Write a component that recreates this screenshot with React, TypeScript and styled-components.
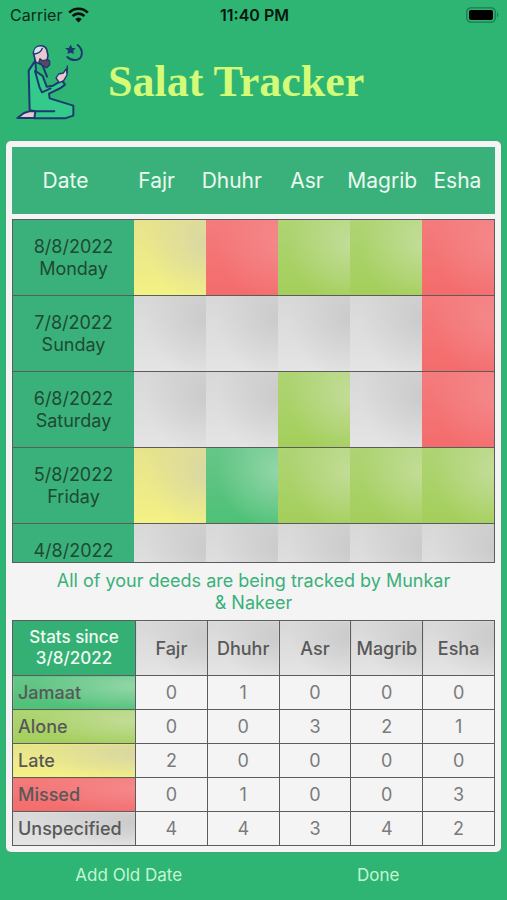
import React from "react";
import styled, { createGlobalStyle } from "styled-components";

type Status = "jamaat" | "alone" | "late" | "missed" | "unspecified";

interface Tone {
  top: string;
  bottom: string;
  corner: string;
}

const tones: Record<Status, Tone> = {
  jamaat: { top: "#66c688", bottom: "#4ec177", corner: "#9ad9ae" },
  alone: { top: "#aed474", bottom: "#a4cf5b", corner: "#c6de9e" },
  late: { top: "#e6e38c", bottom: "#f4f185", corner: "#d6d5a6" },
  missed: { top: "#f47b7c", bottom: "#f46c6c", corner: "#f48a8c" },
  unspecified: { top: "#d8d8d8", bottom: "#e4e4e4", corner: "#c8c8c8" },
};

const shade = ({ top, bottom, corner }: Tone) =>
  `radial-gradient(ellipse 85% 80% at 100% 30%, ${corner}dd, ${corner}77 45%, ${corner}00), linear-gradient(to bottom, ${top}, ${bottom})`;

const prayers = ["Fajr", "Dhuhr", "Asr", "Magrib", "Esha"];

const days: { date: string; day?: string; marks: Status[] }[] = [
  { date: "8/8/2022", day: "Monday", marks: ["late", "missed", "alone", "alone", "missed"] },
  { date: "7/8/2022", day: "Sunday", marks: ["unspecified", "unspecified", "unspecified", "unspecified", "missed"] },
  { date: "6/8/2022", day: "Saturday", marks: ["unspecified", "unspecified", "alone", "unspecified", "missed"] },
  { date: "5/8/2022", day: "Friday", marks: ["late", "jamaat", "alone", "alone", "alone"] },
  { date: "4/8/2022", marks: ["unspecified", "unspecified", "unspecified", "unspecified", "unspecified"] },
];

const stats: { label: string; status: Status; counts: number[] }[] = [
  { label: "Jamaat", status: "jamaat", counts: [0, 1, 0, 0, 0] },
  { label: "Alone", status: "alone", counts: [0, 0, 3, 2, 1] },
  { label: "Late", status: "late", counts: [2, 0, 0, 0, 0] },
  { label: "Missed", status: "missed", counts: [0, 1, 0, 0, 3] },
  { label: "Unspecified", status: "unspecified", counts: [4, 4, 3, 4, 2] },
];

const GlobalStyle = createGlobalStyle`
  * { box-sizing: border-box; }
  body { margin: 0; background: #2eb574; }
`;

const Screen = styled.div`
  display: flex;
  flex-direction: column;
  height: 100vh;
  min-height: 640px;
  background: #2eb574;
  font-family: Inter, "Liberation Sans", sans-serif;
`;

const StatusBar = styled.div`
  display: grid;
  grid-template-columns: 1fr auto 1fr;
  align-items: center;
  height: 30px;
  padding: 0 8px 0 10px;
  font-size: 16px;
  color: #0a2c1c;
`;

const Carrier = styled.div`
  display: flex;
  align-items: center;
  gap: 6px;
`;

const Clock = styled.div`
  font-weight: 600;
  color: #05170e;
`;

const Battery = styled.svg`
  justify-self: end;
`;

const Header = styled.header`
  display: flex;
  align-items: flex-start;
  gap: 18px;
  height: 111px;
  padding: 8px 10px 0;
`;

const Title = styled.h1`
  margin: 0;
  padding-top: 20px;
  font-family: "Liberation Serif", serif;
  font-size: 44px;
  line-height: 48px;
  font-weight: 700;
  color: #d3fb78;
`;

const Panel = styled.main`
  flex: 1;
  min-height: 0;
  display: flex;
  flex-direction: column;
  margin: 0 6px;
  padding: 6px;
  border-radius: 5px;
  background: #f4f4f4;
  box-shadow: 0 0 2px #6c8f7e;
`;

const LogHead = styled.div`
  display: grid;
  grid-template-columns: 107px repeat(5, 1fr);
  align-items: center;
  flex: none;
  height: 67px;
  margin-bottom: 5px;
  background: #3ab17a;
  color: #ecf9f0;
  font-size: 21px;
  text-align: center;
`;

const LogScroll = styled.div`
  flex: 1;
  min-height: 0;
  overflow: hidden;
  border: 1px solid #5c5c5c;
`;

const Table = styled.table`
  width: 100%;
  border-collapse: collapse;
  table-layout: fixed;
`;

const LogTable = styled(Table)`
  border-collapse: separate;
  border-spacing: 0;

  th,
  td {
    border-bottom: 1px solid #5c5c5c;
  }
`;

const DayCell = styled.th`
  width: 121px;
  padding: 16px 0 0;
  vertical-align: top;
  background: #3ab17a;
  color: #1d4a34;
  font-size: 18px;
  line-height: 22px;
  font-weight: 400;
`;

const MarkCell = styled.td<{ $status: Status }>`
  padding: 0;
  background: ${({ $status }) => shade(tones[$status])};
`;

const MarkButton = styled.button`
  display: block;
  width: 100%;
  height: 75px;
  border: 0;
  background: transparent;
`;

const Note = styled.p`
  flex: none;
  margin: 0;
  padding: 7px 36px 6px;
  font-size: 18px;
  line-height: 22px;
  text-align: center;
  color: #3ab17a;
`;

const StatsTable = styled(Table)`
  flex: none;
  color: #585858;
  font-size: 18px;

  th,
  td {
    height: 34px;
    padding: 0;
    border: 1px solid #5c5c5c;
  }
  thead th {
    height: 55px;
  }
`;

const StatsCorner = styled.th`
  width: 123px;
  background: #35b075;
  color: #eefaf2;
  font-size: 17px;
  line-height: 21px;
  font-weight: 500;
`;

const PrayerHead = styled.th`
  background: ${shade(tones.unspecified)};
  font-weight: 500;
`;

const StatusLabel = styled.th<{ $status: Status }>`
  && {
    padding-left: 5px;
  }
  background: ${({ $status }) => shade(tones[$status])};
  font-weight: 500;
  text-align: left;
`;

const Count = styled.td`
  color: #7b7b7b;
  text-align: center;
`;

const Footer = styled.footer`
  display: grid;
  grid-template-columns: 1fr 1fr;
  flex: none;
  height: 48px;
  padding: 0 4px 3px;
`;

const FooterButton = styled.button`
  border: 0;
  background: transparent;
  font: inherit;
  font-size: 17px;
  color: #c5f5d4;
`;

const WifiIcon = () => (
  <svg width="21" height="16" viewBox="0 0 21 16" aria-hidden="true">
    <g fill="none" stroke="#06120c" strokeWidth="2.7">
      <path d="M1.2 5.6a13.2 13.2 0 0 1 18.6 0" />
      <path d="M4.6 9.1a8.4 8.4 0 0 1 11.8 0" />
    </g>
    <path d="M10.5 15.4 7.2 12a4.8 4.8 0 0 1 6.6 0z" fill="#06120c" />
  </svg>
);

const BatteryIcon = () => (
  <Battery width="33" height="16" viewBox="0 0 33 16" aria-hidden="true">
    <rect x="0.8" y="0.8" width="28.4" height="14.4" rx="4" fill="none" stroke="#1d7a4f" strokeWidth="1.3" />
    <rect x="3" y="3" width="24" height="10" rx="2" fill="#000" />
    <path d="M31 5.6c1.6.6 1.6 4.2 0 4.8z" fill="#1d7a4f" />
  </Battery>
);

const Logo = () => (
  <svg width="80" height="86" viewBox="0 0 240 258" aria-hidden="true">
    <g stroke="#1d3a70" strokeWidth="6" strokeLinejoin="round" strokeLinecap="round">
      <path d="M22 240l20-15 16-5h22l-4 20z" fill="#e9c9cf" />
      <path
        d="M76 68 56 98l3 119 17 3-3 21h92l25-8v-30l-71-22-2-14 35-17 13-10-9-13-27 16-19 3-12-32-20-14z"
        fill="#34ca8b"
      />
      <path d="M76 220h57" fill="none" />
      <path d="M75 99l14 50 7 14 26-12" fill="none" />
      <path d="M98 83l13 33" fill="none" />
      <path d="M138 120l8-12 14-3 10-14 1 20-10 17-13 6z" fill="#e9c9cf" strokeWidth="4" />
      <path d="M172 104v-20" fill="none" strokeWidth="4" />
      <path d="M77 72l-7-28 6-14c11-10 29-9 34 4l4 19-3 14-14 14z" fill="#e9c9cf" strokeWidth="5" />
      <path d="M73 46c-2-12 6-20 16-20l8 4c-2 10-9 15-24 16z" fill="#d5e2f7" stroke="none" />
      <path d="M90 62l8 6 15-3 6 4v11l-9 9-13-6-10-11z" fill="#5a4766" strokeWidth="4" />
      <path d="M73 48c11-1 20-6 24-17" fill="none" strokeWidth="4" />
      <path d="M203 21c18 14 17 43-6 45-10 1-18-2-25-9" fill="none" strokeWidth="6" />
    </g>
    <path d="M182 24l3 7 8 1-5 5 1 8-7-3-7 3 1-8-6-5 8-1z" fill="#1d3a70" stroke="#1d3a70" strokeWidth="4" />
  </svg>
);

export default function App() {
  return (
    <Screen>
      <GlobalStyle />
      <StatusBar>
        <Carrier>
          Carrier
          <WifiIcon />
        </Carrier>
        <Clock>11:40 PM</Clock>
        <BatteryIcon />
      </StatusBar>
      <Header>
        <Logo />
        <Title>Salat Tracker</Title>
      </Header>
      <Panel>
        <LogHead>
          <span>Date</span>
          {prayers.map((name) => (
            <span key={name}>{name}</span>
          ))}
        </LogHead>
        <LogScroll>
          <LogTable>
            <tbody>
              {days.map(({ date, day, marks }) => (
                <tr key={date}>
                  <DayCell scope="row">
                    {date}
                    <br />
                    {day}
                  </DayCell>
                  {marks.map((status, i) => (
                    <MarkCell key={prayers[i]} $status={status}>
                      <MarkButton type="button" aria-label={`${prayers[i]} ${date}: ${status}`} />
                    </MarkCell>
                  ))}
                </tr>
              ))}
            </tbody>
          </LogTable>
        </LogScroll>
        <Note>All of your deeds are being tracked by Munkar &amp;&nbsp;Nakeer</Note>
        <StatsTable>
          <thead>
            <tr>
              <StatsCorner scope="col">
                Stats since
                <br />
                3/8/2022
              </StatsCorner>
              {prayers.map((name) => (
                <PrayerHead key={name} scope="col">
                  {name}
                </PrayerHead>
              ))}
            </tr>
          </thead>
          <tbody>
            {stats.map(({ label, status, counts }) => (
              <tr key={label}>
                <StatusLabel scope="row" $status={status}>
                  {label}
                </StatusLabel>
                {counts.map((count, i) => (
                  <Count key={prayers[i]}>{count}</Count>
                ))}
              </tr>
            ))}
          </tbody>
        </StatsTable>
      </Panel>
      <Footer>
        <FooterButton type="button">Add Old Date</FooterButton>
        <FooterButton type="button">Done</FooterButton>
      </Footer>
    </Screen>
  );
}
